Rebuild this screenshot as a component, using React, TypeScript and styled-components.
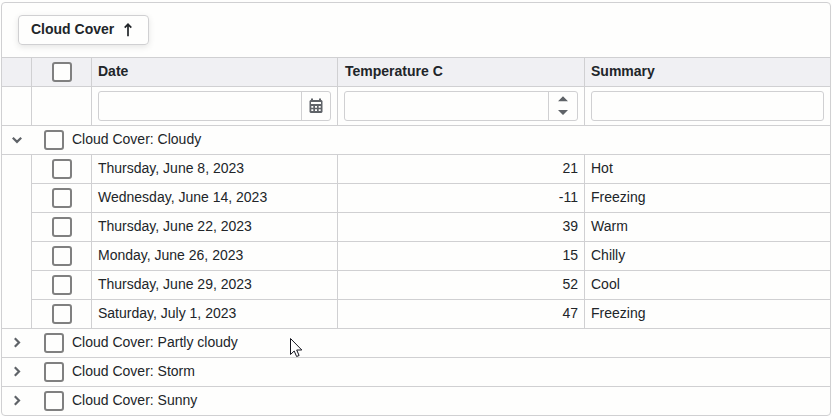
import React from "react";
import styled, { createGlobalStyle } from "styled-components";

const line = "#d0d0d2";
const ink = "#212529";
const iconColor = "#5f6368";

const GlobalStyle = createGlobalStyle`
  *, *::before, *::after { box-sizing: border-box; }
  body {
    margin: 0;
    background: #fefefd;
    color: ${ink};
    font: 14px/20px "Liberation Sans", Arial, sans-serif;
    overflow: hidden;
  }
`;

const Page = styled.main`
  height: 416px;
  padding: 2px 1px 0;
`;

const Grid = styled.div`
  height: 414px;
  border: 1px solid ${line};
  border-radius: 4px;
  overflow: hidden;
`;

const GroupPanel = styled.div`
  height: 55px;
  padding: 12px 16px;
  border-bottom: 1px solid ${line};
`;

const GroupChip = styled.div`
  display: inline-flex;
  align-items: center;
  justify-content: space-between;
  width: 131px;
  height: 30px;
  padding: 0 16px 0 12px;
  border: 1px solid ${line};
  border-radius: 4px;
  box-shadow: 0 2px 6px rgba(0, 0, 0, 0.1);
  font-weight: 700;
  white-space: nowrap;
`;

const Label = styled.span`
  white-space: nowrap;
`;

const CellText = styled(Label)`
  padding-bottom: 2px;
`;

const InsetHeaderText = styled(CellText)`
  padding-left: 1px;
`;

const GridRow = styled.div<{ $height: number; $header?: boolean }>`
  display: grid;
  grid-template-columns: 30px 60px 246px 247px 1fr;
  height: ${(p) => p.$height}px;
  background: ${(p) => (p.$header ? "#f0f0f3" : "transparent")};
  font-weight: ${(p) => (p.$header ? 700 : 400)};
`;

const Cell = styled.div<{ $align?: string; $open?: boolean; $last?: boolean }>`
  display: flex;
  align-items: center;
  justify-content: ${(p) => p.$align ?? "flex-start"};
  padding: 0 6px;
  border-right: ${(p) => (p.$last ? "0" : `1px solid ${line}`)};
  border-bottom: ${(p) => (p.$open ? "0" : `1px solid ${line}`)};
  min-width: 0;
`;

const GroupRow = styled.div<{ $last?: boolean }>`
  display: flex;
  align-items: center;
  height: ${(p) => (p.$last ? 28 : 29)}px;
  border-bottom: ${(p) => (p.$last ? "0" : `1px solid ${line}`)};
`;

const Expander = styled.span`
  display: flex;
  align-items: center;
  justify-content: center;
  width: 30px;
  margin-right: 12px;
`;

const CheckBox = styled.span`
  flex: none;
  width: 20px;
  height: 20px;
  border: 2px solid #808080;
  border-radius: 3px;
  background: #fefefd;
`;

const GroupText = styled(CellText)`
  margin-left: 8px;
`;

const Editor = styled.div`
  display: flex;
  justify-content: flex-end;
  width: 100%;
  height: 30px;
  border: 1px solid ${line};
  border-radius: 3px;
`;

const EditorButton = styled.span`
  display: flex;
  flex-direction: column;
  align-items: center;
  justify-content: center;
  width: 29px;
  border-left: 1px solid ${line};
`;

const Pointer = styled.svg`
  position: absolute;
  left: 290px;
  top: 338px;
`;

const Chevron = ({ down }: { down?: boolean }) => (
  <svg width="12" height="12" viewBox="0 0 12 12" fill="none" stroke={iconColor} strokeWidth="2.2">
    <path d={down ? "M1.8 3.7 6 7.9 10.2 3.7" : "M3.8 1.3 8 5.5 3.8 9.7"} />
  </svg>
);

const Calendar = () => (
  <svg width="14" height="16" viewBox="0 0 14 16">
    <path
      fill={iconColor}
      fillRule="evenodd"
      d="M2 .5h2V2h6V.5h2V2h.5L13.500 3v11L12.500 15h-11L.5 14V3L1.500 2H2zM2 4v2h10V4zM2.300 8v1.800h2V8zM6 8v1.800h2V8zM9.700 8v1.800h2V8zM2.300 11.300v1.800h2v-1.800zM6 11.300v1.800h2v-1.800zM9.700 11.300v1.800h2v-1.800z"
    />
  </svg>
);

const Spinner = () => (
  <svg width="10" height="20" viewBox="0 0 10 20" fill={iconColor}>
    <path d="M0 5.300 5 .3l5 5zM0 14h10l-5 5z" />
  </svg>
);

const SortArrow = () => (
  <svg width="8" height="15" viewBox="0 0 8 15" fill="none" stroke={ink} strokeWidth="1.7">
    <path d="M4 13.300V1.400M.7 4.600 4 1.300l3.300 3.300" />
  </svg>
);

const records: [string, number, string][] = [
  ["Thursday, June 8, 2023", 21, "Hot"],
  ["Wednesday, June 14, 2023", -11, "Freezing"],
  ["Thursday, June 22, 2023", 39, "Warm"],
  ["Monday, June 26, 2023", 15, "Chilly"],
  ["Thursday, June 29, 2023", 52, "Cool"],
  ["Saturday, July 1, 2023", 47, "Freezing"],
];

const Group = ({ name, open, last }: { name: string; open?: boolean; last?: boolean }) => (
  <GroupRow $last={last}>
    <Expander><Chevron down={open} /></Expander>
    <CheckBox />
    <GroupText>Cloud Cover: {name}</GroupText>
  </GroupRow>
);

export default function App() {
  return (
    <Page>
      <GlobalStyle />
      <Grid>
        <GroupPanel>
          <GroupChip>
            <CellText>Cloud Cover</CellText>
            <SortArrow />
          </GroupChip>
        </GroupPanel>
        <GridRow $height={29} $header>
          <Cell />
          <Cell $align="center"><CheckBox /></Cell>
          <Cell><CellText>Date</CellText></Cell>
          <Cell><InsetHeaderText>Temperature C</InsetHeaderText></Cell>
          <Cell $last><CellText>Summary</CellText></Cell>
        </GridRow>
        <GridRow $height={39}>
          <Cell />
          <Cell />
          <Cell><Editor><EditorButton><Calendar /></EditorButton></Editor></Cell>
          <Cell><Editor><EditorButton><Spinner /></EditorButton></Editor></Cell>
          <Cell $last><Editor /></Cell>
        </GridRow>
        <Group name="Cloudy" open />
        {records.map(([date, temperature, summary], i) => (
          <GridRow key={date} $height={29}>
            <Cell $open={i < records.length - 1} />
            <Cell $align="center"><CheckBox /></Cell>
            <Cell><CellText>{date}</CellText></Cell>
            <Cell $align="flex-end"><CellText>{temperature}</CellText></Cell>
            <Cell $last><CellText>{summary}</CellText></Cell>
          </GridRow>
        ))}
        <Group name="Partly cloudy" />
        <Group name="Storm" />
        <Group name="Sunny" last />
      </Grid>
      <Pointer width="13" height="20" viewBox="0 0 13 20">
        <path d="M.5.5v16l3.700-3.500 2.400 5.500 2.500-1-2.400-5.500h5.100z" fill="#fff" stroke="#15151f" />
      </Pointer>
    </Page>
  );
}
